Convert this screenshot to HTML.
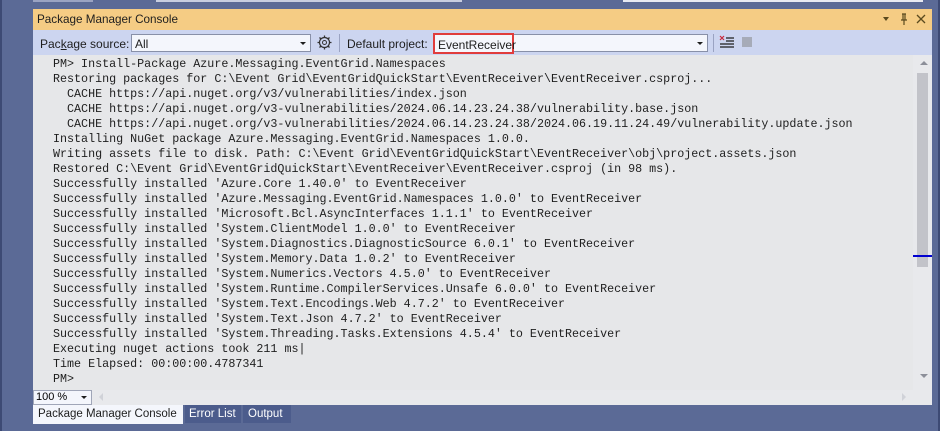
<!DOCTYPE html>
<html><head><style>
body{margin:0;width:940px;height:431px;background:#5b6a96;position:relative;overflow:hidden;font-family:"Liberation Sans",sans-serif}
.a{position:absolute}
#title{left:33px;top:9px;width:899px;height:21px;background:#f5cc84;font-size:12px;color:#1e1e1e}
#tb{left:33px;top:30px;width:899px;height:25px;background:#ccd5f0;font-size:12px;color:#1e1e1e}
#con{left:33px;top:55px;width:899px;height:335px;background:#e6e7e9}
pre{margin:0;position:absolute;left:20px;top:2px;font-family:"Liberation Mono",monospace;font-size:11.7px;line-height:15px;color:#1e1e1e}
.combo{position:absolute;background:#f4f6fc;border:1px solid #8890a8;height:18px;box-sizing:border-box}
.arr{position:absolute;right:4px;top:7px;width:0;height:0;border-left:3px solid transparent;border-right:3px solid transparent;border-top:3px solid #1e1e1e}
</style></head><body>
<div class="a" style="left:0;top:0;width:2px;height:431px;background:#3d4a74"></div>
<div class="a" style="left:33px;top:0;width:60px;height:2px;background:#9aa3c2"></div>
<div class="a" style="left:156px;top:0;width:306px;height:2px;background:#c7cde0"></div>
<div class="a" style="left:623px;top:0;width:300px;height:2px;background:#e8eaf2"></div>
<div class="a" style="left:938px;top:0;width:2px;height:431px;background:#3d4a74"></div>

<div id="title" class="a"><span class="a" style="left:4px;top:4px;font-size:11.7px">Package Manager Console</span>
<span class="a" style="left:850px;top:8px;width:0;height:0;border-left:3.5px solid transparent;border-right:3.5px solid transparent;border-top:4px solid #5b4a1e"></span>
<svg class="a" style="left:866px;top:4px" width="10" height="13"><path d="M3 1h4M4 1v6M6 1v6M2 7h6M5 7v5" stroke="#5b4a1e" stroke-width="1.2" fill="none"/></svg>
<svg class="a" style="left:883px;top:5px" width="10" height="10"><path d="M1 1L9 9M9 1L1 9" stroke="#5b4a1e" stroke-width="1.3"/></svg>
</div>

<div id="tb" class="a">
<span class="a" style="left:7px;top:7px">Pac<u>k</u>age source:</span>
<div class="combo" style="left:98px;top:4px;width:180px"><span class="a" style="left:3px;top:2px;font-size:12px">All</span><div class="arr"></div></div>
<svg class="a" style="left:284px;top:5px" width="15" height="15"><circle cx="7.5" cy="7.5" r="5" fill="none" stroke="#333" stroke-width="1.2"/><circle cx="7.5" cy="7.5" r="2" fill="none" stroke="#333"/><path d="M7.5 0.5v2M7.5 12.5v2M0.5 7.5h2M12.5 7.5h2M2.5 2.5l1.5 1.5M11 11l1.5 1.5M2.5 12.5l1.5-1.5M11 4l1.5-1.5" stroke="#333" stroke-width="1.3"/></svg>
<div class="a" style="left:306px;top:4px;width:1px;height:18px;background:#9aa3c2"></div>
<span class="a" style="left:314px;top:7px">Default project:</span>
<div class="combo" style="left:400px;top:4px;width:275px"><div class="arr"></div></div>
<div class="a" style="left:400px;top:3px;width:81px;height:21px;border:2px solid #e03c3c;box-sizing:border-box;background:#f4f6fc"><span class="a" style="left:3px;top:3px">EventReceiver</span></div>
<div class="a" style="left:680px;top:4px;width:1px;height:18px;background:#9aa3c2"></div>
<svg class="a" style="left:686px;top:5px" width="16" height="15"><path d="M1 1l4 4M5 1L1 5" stroke="#c8283c" stroke-width="1.2"/><path d="M7 3h8M7 6h8M1 9h14M1 12h14" stroke="#1e1e1e" stroke-width="1.2"/></svg>
<div class="a" style="left:709px;top:7px;width:10px;height:10px;background:#a6abb8"></div>
</div>

<div id="con" class="a">
<pre>PM&gt; Install-Package Azure.Messaging.EventGrid.Namespaces
Restoring packages for C:\Event Grid\EventGridQuickStart\EventReceiver\EventReceiver.csproj...
  CACHE https://api.nuget.org/v3/vulnerabilities/index.json
  CACHE https://api.nuget.org/v3-vulnerabilities/2024.06.14.23.24.38/vulnerability.base.json
  CACHE https://api.nuget.org/v3-vulnerabilities/2024.06.14.23.24.38/2024.06.19.11.24.49/vulnerability.update.json
Installing NuGet package Azure.Messaging.EventGrid.Namespaces 1.0.0.
Writing assets file to disk. Path: C:\Event Grid\EventGridQuickStart\EventReceiver\obj\project.assets.json
Restored C:\Event Grid\EventGridQuickStart\EventReceiver\EventReceiver.csproj (in 98 ms).
Successfully installed 'Azure.Core 1.40.0' to EventReceiver
Successfully installed 'Azure.Messaging.EventGrid.Namespaces 1.0.0' to EventReceiver
Successfully installed 'Microsoft.Bcl.AsyncInterfaces 1.1.1' to EventReceiver
Successfully installed 'System.ClientModel 1.0.0' to EventReceiver
Successfully installed 'System.Diagnostics.DiagnosticSource 6.0.1' to EventReceiver
Successfully installed 'System.Memory.Data 1.0.2' to EventReceiver
Successfully installed 'System.Numerics.Vectors 4.5.0' to EventReceiver
Successfully installed 'System.Runtime.CompilerServices.Unsafe 6.0.0' to EventReceiver
Successfully installed 'System.Text.Encodings.Web 4.7.2' to EventReceiver
Successfully installed 'System.Text.Json 4.7.2' to EventReceiver
Successfully installed 'System.Threading.Tasks.Extensions 4.5.4' to EventReceiver
Executing nuget actions took 211 ms|
Time Elapsed: 00:00:00.4787341
PM&gt;</pre>
<div class="a" style="left:880px;top:0;width:19px;height:335px;background:#e8e9ec"></div>
<div class="a" style="left:887px;top:6px;width:0;height:0;border-left:4px solid transparent;border-right:4px solid transparent;border-bottom:4px solid #8c8f99"></div>
<div class="a" style="left:884px;top:18px;width:11px;height:194px;background:#c2c3c9"></div>
<div class="a" style="left:880px;top:200px;width:19px;height:2px;background:#0000d0"></div>
<div class="a" style="left:887px;top:319px;width:0;height:0;border-left:4px solid transparent;border-right:4px solid transparent;border-top:4px solid #8c8f99"></div>
</div>
<div class="a" style="left:33px;top:390px;width:899px;height:15px;background:#e8e9ec"></div>
<div class="a" style="left:33px;top:390px;width:59px;height:15px;background:#f4f6fc;border:1px solid #a0a6b8;box-sizing:border-box;font-size:11px"><span class="a" style="left:2px;top:0">100 %</span><div class="arr" style="top:5px"></div></div>
<div class="a" style="left:99px;top:393px;width:0;height:0;border-top:4px solid transparent;border-bottom:4px solid transparent;border-right:4px solid #d0d2d8"></div>
<div class="a" style="left:902px;top:393px;width:0;height:0;border-top:4px solid transparent;border-bottom:4px solid transparent;border-left:4px solid #d0d2d8"></div>
<div class="a" style="left:33px;top:405px;width:150px;height:19px;background:#f4f6fc;font-size:11.5px;color:#1e1e1e"><span class="a" style="left:5px;top:3px">Package Manager Console</span></div>
<div class="a" style="left:185px;top:405px;width:56px;height:18px;background:#4c5c8c;font-size:11.5px;color:#fff"><span class="a" style="left:4px;top:3px">Error List</span></div>
<div class="a" style="left:243px;top:405px;width:48px;height:18px;background:#4c5c8c;font-size:11.5px;color:#fff"><span class="a" style="left:5px;top:3px">Output</span></div>
</body></html>
